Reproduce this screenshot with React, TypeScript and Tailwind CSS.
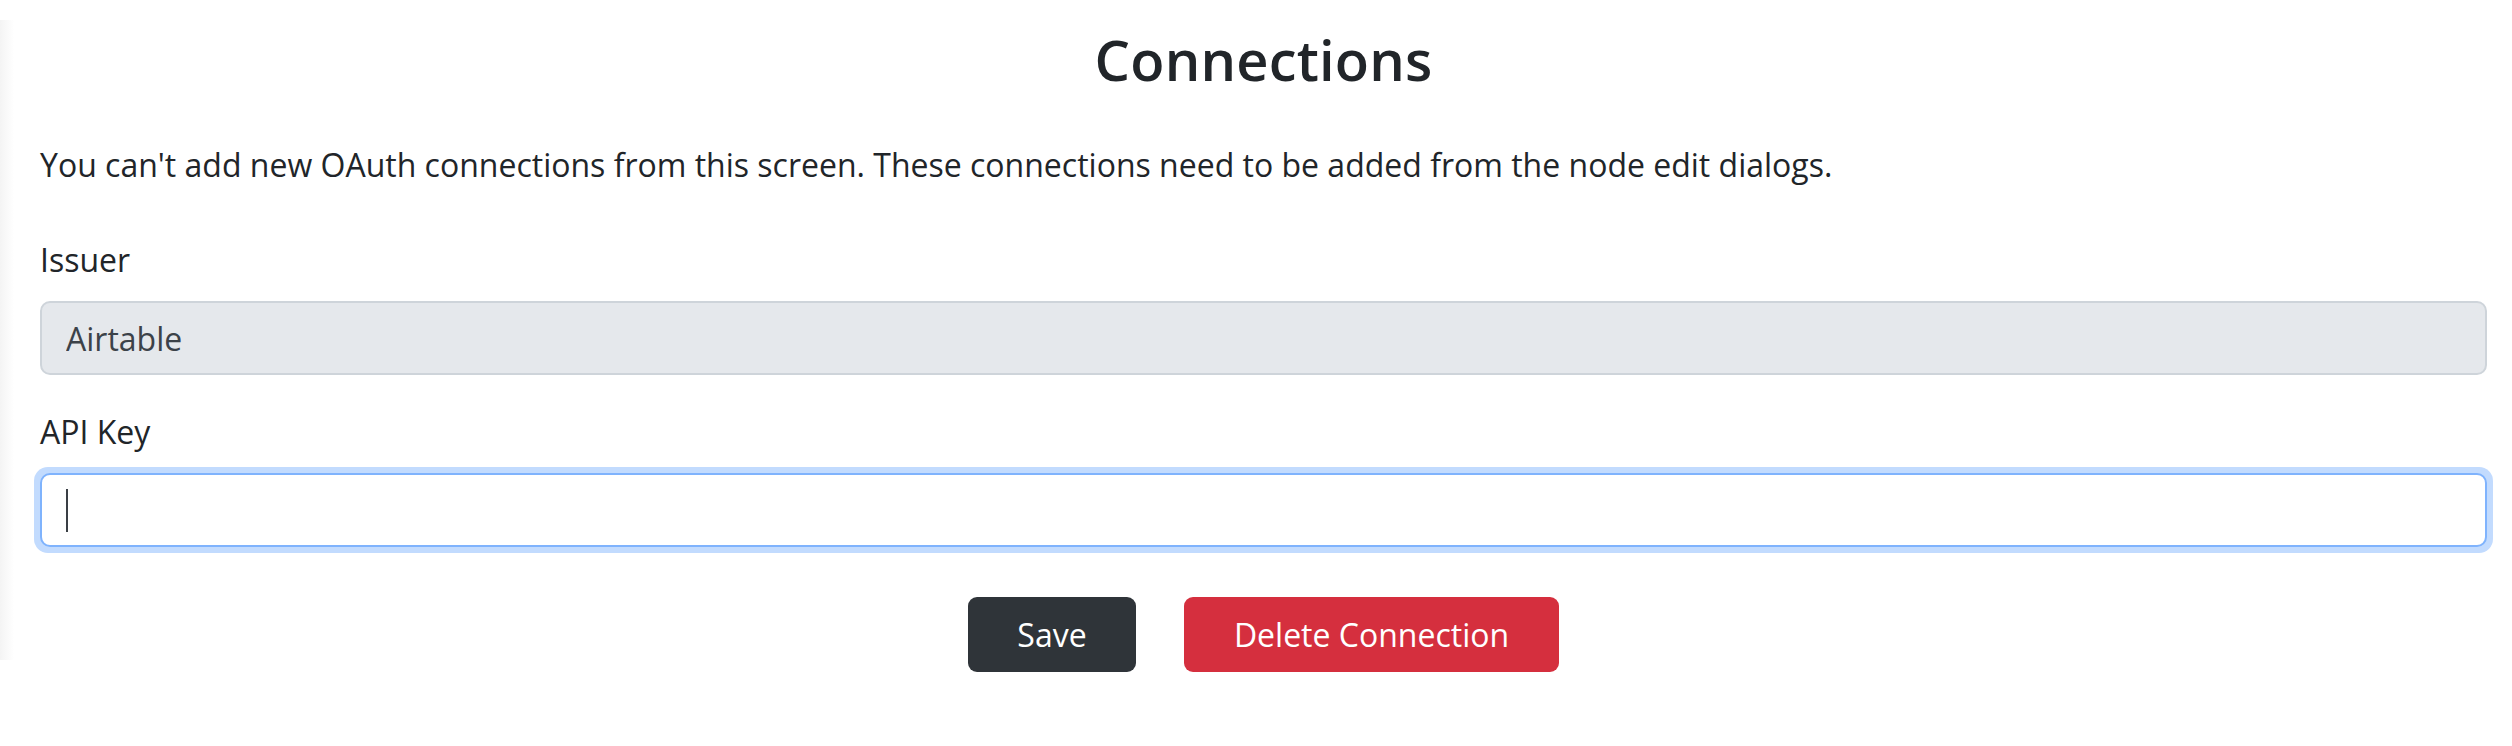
import * as React from "react";

const font = { fontFamily: '"Open Sans", "Liberation Sans", sans-serif' };

const App = () => {
  return (
    <div
      className="relative w-[2512px] h-[746px] bg-white text-[#212529] overflow-hidden"
      style={font}
    >
      <div className="absolute left-0 top-[20px] bottom-[86px] w-[14px] bg-gradient-to-r from-[#f4f4f4] to-white" />
      <div className="relative flex flex-col pl-[40px] pr-[25px]">
        <h1 className="text-center font-semibold text-[56px] leading-[80px] mt-[19px] tracking-[0.2px]">
          Connections
        </h1>
        <p className="text-[32px] leading-[48px] mt-[42px]">
          You can't add new OAuth connections from this screen. These
          connections need to be added from the node edit dialogs.
        </p>
        <label className="text-[32px] leading-[48px] mt-[47px]">Issuer</label>
        <input
          disabled
          value="Airtable"
          readOnly
          className="mt-[17px] h-[74px] rounded-[10px] border-2 border-[#ced4da] bg-[#e5e8ec] px-[24px] text-[32px] text-[#3c4249]"
        />
        <label className="text-[32px] leading-[48px] mt-[33px]">API Key</label>
        <div className="mt-[11px] rounded-[14px] bg-[#c2dbfe] p-[6px] -mx-[6px]">
          <div className="flex h-[74px] items-center rounded-[10px] border-2 border-[#7fb3fd] bg-white px-[24px]">
            <div className="w-[2px] h-[43px] bg-[#3a3f45]" />
          </div>
        </div>
        <div className="mt-[44px] flex justify-center">
          <button className="mx-[24px] h-[75px] w-[168px] rounded-[9px] bg-[#2f3439] text-[32px] text-white">
            Save
          </button>
          <button className="mx-[24px] h-[75px] w-[375px] rounded-[9px] bg-[#d52f3e] text-[32px] text-white">
            Delete Connection
          </button>
        </div>
      </div>
    </div>
  );
};

export default App;
